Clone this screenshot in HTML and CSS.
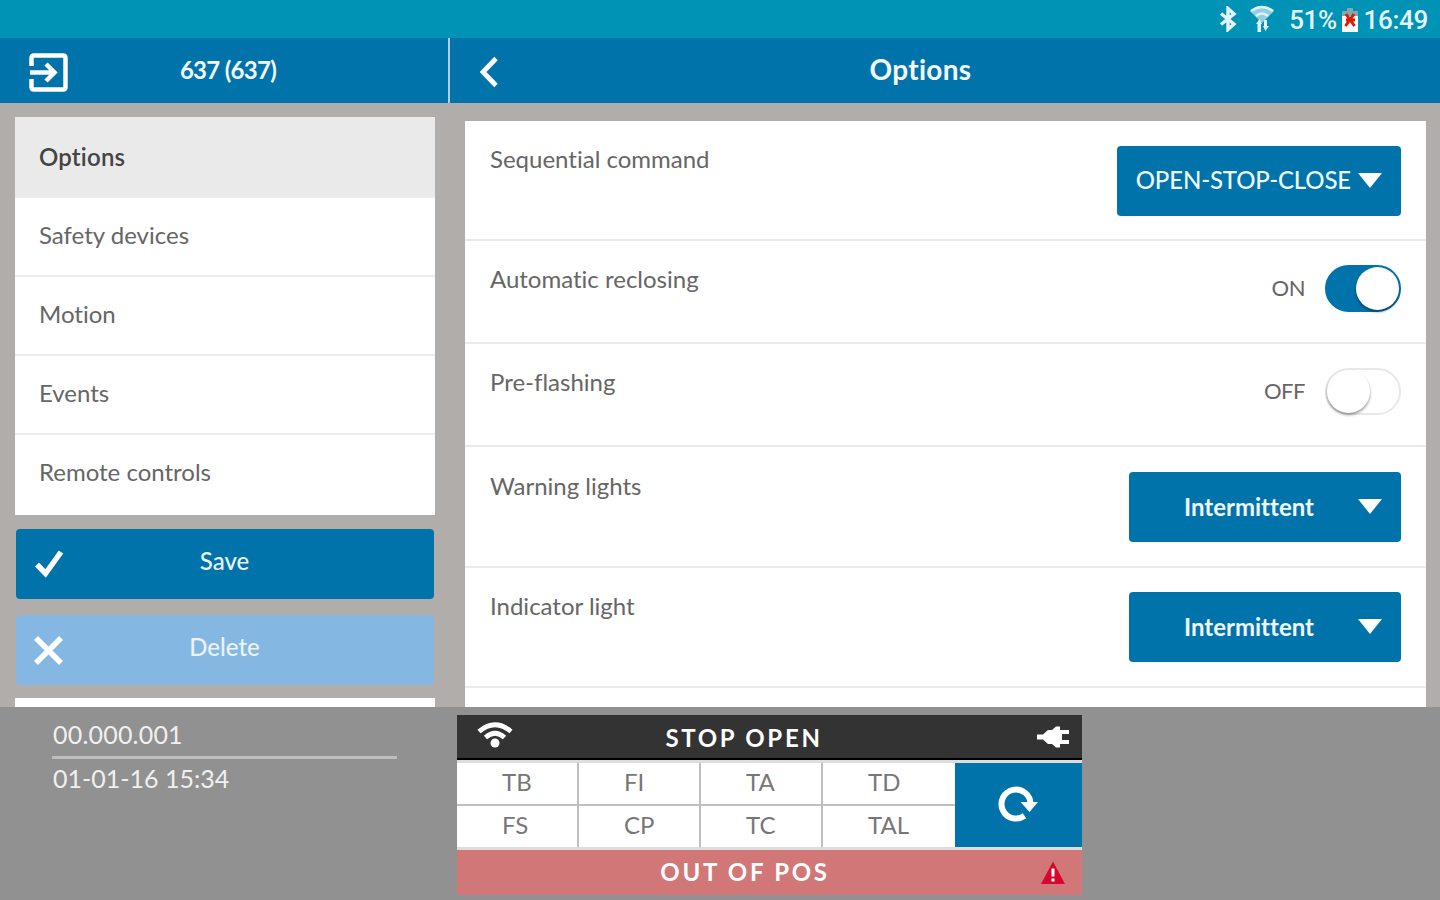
FILE: index.html
```html
<!DOCTYPE html>
<html lang="en">
  <head>
    <meta charset="UTF-8" />
    <meta name="viewport" content="width=device-width, initial-scale=1.0" />
    <title>Options</title>
    <link rel="stylesheet" href="styles.css">
  </head>
  <body>
    <div class="statusbar">
      <svg class="bt" viewBox="0 0 18 26"><path d="M2 7.5 L15 18 L9 23.5 V2.5 L15 8 L2 18.5" /></svg>
      <svg class="signal" viewBox="0 0 26 28">
        <path class="fan" d="M1 7 Q13 -3 25 7 L13 19 Z" />
        <path class="arcs" d="M2 7 Q13 -1 24 7 M7 12 Q13 7 19 12" />
        <path class="arrows" d="M7 20 L10.500 15 L13 20 H12 V28 H8.500 V20 Z M15 16 H18 V22 H20 L16.500 27 L14 22 H15 Z" />
      </svg>
      <span class="percent">51%</span>
      <svg class="battery" viewBox="0 0 16 24">
        <path class="cap" d="M5 0 H11 V3 H16 V8 H0 V3 H5 Z" />
        <path class="cell" d="M0 8 H16 V24 H0 Z" />
        <path class="cross" d="M4 6 L12.500 18 M12 6 L3.500 18 M4 12 H13" />
      </svg>
      <span class="clock">16:49</span>
    </div>

    <div class="header">
      <div class="header-left">
        <svg class="exit" viewBox="0 0 40 40">
          <path d="M2.500 13 V5 Q2.500 2.500 5 2.500 H34 Q36.500 2.500 36.500 5 V34 Q36.500 36.500 34 36.500 H5 Q2.500 36.500 2.500 34 V26" />
          <path d="M1 19.500 H25 M17 11 L25.500 19.500 L17 28" />
        </svg>
        <p class="device">637 (637)</p>
      </div>
      <div class="header-right">
        <svg class="back" viewBox="0 0 20 32"><path d="M17 2.500 L4 16 L17 29.500" /></svg>
        <p class="title">Options</p>
      </div>
    </div>

    <div class="main">
      <div class="sidebar">
        <div class="menu">
          <div class="item active">Options</div>
          <div class="item">Safety devices</div>
          <div class="item">Motion</div>
          <div class="item">Events</div>
          <div class="item">Remote controls</div>
        </div>
        <div class="btn save">
          <svg class="btn-icon" viewBox="0 0 32 32"><path class="tick" d="M4 16.500 L12.500 25.500 L28 4" /></svg>
          <span class="btn-text">Save</span>
        </div>
        <div class="btn delete">
          <svg class="btn-icon" viewBox="0 0 32 32"><path class="cancel" d="M3 4 L28 29 M28 4 L3 29" /></svg>
          <span class="btn-text">Delete</span>
        </div>
        <div class="next"></div>
      </div>

      <div class="content">
        <div class="row tall first">
          <span class="label">Sequential command</span>
          <div class="select wide">
            <span class="value">OPEN-STOP-CLOSE</span>
            <svg class="arrow" viewBox="0 0 24 15"><path d="M0 0 H24 L12 15 Z" /></svg>
          </div>
        </div>
        <div class="row">
          <span class="label">Automatic reclosing</span>
          <div class="switch">
            <span class="state">ON</span>
            <div class="track on"><div class="knob"></div></div>
          </div>
        </div>
        <div class="row">
          <span class="label">Pre-flashing</span>
          <div class="switch">
            <span class="state">OFF</span>
            <div class="track"><div class="knob"></div></div>
          </div>
        </div>
        <div class="row tall">
          <span class="label">Warning lights</span>
          <div class="select">
            <span class="value">Intermittent</span>
            <svg class="arrow" viewBox="0 0 24 15"><path d="M0 0 H24 L12 15 Z" /></svg>
          </div>
        </div>
        <div class="row tall last">
          <span class="label">Indicator light</span>
          <div class="select">
            <span class="value">Intermittent</span>
            <svg class="arrow" viewBox="0 0 24 15"><path d="M0 0 H24 L12 15 Z" /></svg>
          </div>
        </div>
        <div class="row"></div>
      </div>
    </div>

    <div class="footer">
      <div class="info">
        <p class="version">00.000.001</p>
        <p class="date">01-01-16 15:34</p>
      </div>
      <div class="panel">
        <div class="bar">
          <svg class="wifi" viewBox="0 0 36 26">
            <path d="M2 9.500 Q18 -4 34 9.500" />
            <path d="M8.500 15.500 Q18 7 27.500 15.500" />
            <circle cx="18" cy="21" r="4.500" />
          </svg>
          <span class="bar-text">STOP OPEN</span>
          <svg class="plug" viewBox="0 0 32 22"><path d="M0 8.500 H6 L11 4 H15 L19 0.500 H23 V4 H32 V8 H25 V14 H32 V18 H23 V21.500 H19 L15 18 H11 L6 13.500 H0 Z" /></svg>
        </div>
        <div class="middle">
          <div class="grid">
            <div class="cell-box">TB</div>
            <div class="cell-box">FI</div>
            <div class="cell-box">TA</div>
            <div class="cell-box">TD</div>
            <div class="cell-box">FS</div>
            <div class="cell-box">CP</div>
            <div class="cell-box">TC</div>
            <div class="cell-box">TAL</div>
          </div>
          <div class="refresh">
            <svg class="reload" viewBox="0 0 42 36">
              <path class="ring" d="M26.500 29.800 A14.500 14.500 0 1 1 32.500 18" />
              <path class="head" d="M22.500 16 H40 L31.500 26 Z" />
            </svg>
          </div>
        </div>
        <div class="bar alarm">
          <span class="bar-text">OUT OF POS</span>
          <svg class="warn" viewBox="0 0 26 24">
            <path class="triangle" d="M13 0.500 L25 23 H1 Z" />
            <path class="mark" d="M13 7.500 V15.500 M13 17.500 V20.500" />
          </svg>
        </div>
      </div>
    </div>
  </body>
</html>
```
FILE: styles.css
```css
* {
  box-sizing: border-box;
}
body {
  margin: 0;
  height: 900px;
  overflow: hidden;
  display: flex;
  flex-direction: column;
  font-family: Lato, sans-serif;
  font-size: 24px;
  line-height: 30px;
  font-variant-ligatures: none;
  color: #666;
  background-color: #b0adaa;
}
p {
  margin: 0;
}
svg {
  display: block;
  flex: none;
  fill: none;
}

.statusbar {
  height: 38px;
  flex: none;
  display: flex;
  justify-content: flex-end;
  align-items: center;
  padding-right: 12px;
  padding-top: 2px;
  background-color: #0093b5;
  color: #e4f5fa;
  font-family: Roboto, sans-serif;
  font-size: 26px;
}
.bt {
  width: 18px;
  height: 26px;
  margin-right: 12px;
  margin-bottom: 3px;
  stroke: #e4f5fa;
  stroke-width: 3.4;
}
.signal {
  width: 26px;
  height: 28px;
  margin-right: 14px;
  margin-bottom: 5px;
}
.fan {
  fill: #8fd0e2;
}
.arcs {
  stroke: #e4f5fa;
  stroke-width: 2.5;
}
.arrows {
  fill: #e4f5fa;
}
.percent {
  margin-right: 5px;
  letter-spacing: -0.5px;
  font-weight: 500;
}
.battery {
  width: 16px;
  height: 24px;
  margin-right: 6px;
}
.cap {
  fill: #7fa9ad;
}
.cell {
  fill: #fff;
}
.cross {
  stroke: #e01b00;
  stroke-width: 3;
}
.clock {
  letter-spacing: -0.3px;
  font-weight: 500;
}

.header {
  height: 65px;
  flex: none;
  display: flex;
  background-color: #0073ab;
  color: #f2f8fc;
  font-weight: bold;
}
.header-left {
  width: 450px;
  display: flex;
  padding: 15px 0 0 29px;
  border-right: 2px solid #b5cfe0;
}
.exit {
  width: 40px;
  height: 40px;
  stroke: #fff;
  stroke-width: 4.5;
}
.device {
  width: 318px;
  text-align: center;
  padding-top: 2px;
  letter-spacing: -0.7px;
}
.header-right {
  flex: 1;
  display: flex;
  padding: 16px 0 0 29px;
}
.back {
  width: 20px;
  height: 36px;
  stroke: #fff;
  stroke-width: 4.8;
}
.title {
  width: 843px;
  text-align: center;
  font-size: 28px;
  letter-spacing: 0.3px;
}

.main {
  height: 604px;
  flex: none;
  display: flex;
  overflow: hidden;
}
.sidebar {
  width: 465px;
  padding: 14px 30px 0 15px;
  display: flex;
  flex-direction: column;
}
.menu {
  background-color: #fff;
  height: 398px;
  flex: none;
  display: grid;
  grid-template-rows: 79px 79px 79px 79px 1fr;
}
.item {
  padding: 24px 24px 0;
  border-top: 2px solid #ececec;
  line-height: 26px;
}
.active {
  padding-top: 25px;
  background-color: #eaeaea;
  border-top-color: #eaeaea;
  color: #444;
  font-weight: 600;
  letter-spacing: 0.2px;
}
.btn {
  height: 70px;
  flex: none;
  margin: 14px 1px 0;
  border-radius: 4px;
  display: flex;
  align-items: center;
  color: #eaf3fa;
  font-weight: 500;
}
.btn-icon {
  width: 32px;
  height: 32px;
  margin-left: 17px;
  stroke: #fff;
  stroke-width: 5.5;
}
.btn-text {
  width: 319px;
  text-align: center;
  padding-bottom: 7px;
}
.save {
  background-color: #0073ab;
}
.delete {
  margin-top: 16px;
  background-color: #84b8e2;
}
.next {
  flex: 1;
  margin-top: 13px;
  background-color: #fff;
}

.content {
  width: 961px;
  height: 600px;
  margin-top: 18px;
  background-color: #fff;
}
.row {
  height: 103px;
  padding: 24px 25px 0;
  display: flex;
  justify-content: space-between;
  border-top: 2px solid #ebebeb;
}
.tall {
  height: 121px;
  padding-top: 25px;
}
.first {
  height: 118px;
  border-top: none;
}
.last {
  height: 120px;
  padding-top: 24px;
}
.label {
  padding-top: 1px;
  line-height: 26px;
}
.first .label {
  padding-top: 0;
}
.select {
  width: 272px;
  height: 70px;
  border-radius: 4px;
  display: flex;
  align-items: center;
  justify-content: flex-end;
  padding: 0 19px 1px;
  background-color: #0073ab;
  color: #f0f7fb;
  white-space: nowrap;
}
.select .value {
  margin-right: 44px;
  font-weight: bold;
}
.wide {
  width: 284px;
  padding-bottom: 2px;
}
.wide .value {
  margin-right: 7px;
  font-weight: 500;
  letter-spacing: -0.15px;
}
.arrow {
  width: 24px;
  height: 15px;
  fill: #fff;
}
.switch {
  display: flex;
}
.state {
  margin-right: 20px;
  padding-top: 8px;
  font-size: 22px;
  letter-spacing: -0.5px;
}
.track {
  width: 76px;
  height: 47px;
  border: 2px solid #e8e8e8;
  border-radius: 24px;
  display: flex;
}
.knob {
  width: 43px;
  height: 43px;
  border-radius: 50%;
  background-color: #fff;
  box-shadow: 0 2px 3px rgba(0, 0, 0, 0.4);
}
.on {
  justify-content: flex-end;
  background-color: #0073ab;
  border-color: #0073ab;
}

.footer {
  height: 193px;
  flex: none;
  display: flex;
  background-color: #919191;
}
.info {
  width: 345px;
  margin: 12px 60px 0 52px;
  color: #f0f0f0;
  font-size: 25px;
}
.version {
  height: 40px;
  padding-left: 1px;
  border-bottom: 3px solid #bdbdbd;
  letter-spacing: 0.2px;
}
.date {
  padding: 4px 0 0 1px;
}
.panel {
  width: 625px;
  height: 181px;
  margin-top: 8px;
}
.bar {
  height: 45px;
  display: flex;
  align-items: center;
  background-color: #333;
  color: #fff;
  border-bottom: 2px solid #000;
}
.bar-text {
  width: 502px;
  text-align: center;
  font-weight: bold;
  letter-spacing: 2.7px;
  padding-top: 2px;
}
.wifi {
  width: 36px;
  height: 26px;
  margin-left: 20px;
  margin-bottom: 4px;
  stroke: #fff;
  stroke-width: 4.8;
}
.wifi circle {
  fill: #fff;
  stroke: none;
}
.wifi + .bar-text {
  width: 462px;
}
.plug {
  width: 32px;
  height: 22px;
  margin-left: 62px;
  fill: #fff;
}
.middle {
  height: 90px;
  display: flex;
  border-top: 3px solid #ddd;
  border-bottom: 3px solid #ddd;
}
.grid {
  width: 498px;
  display: grid;
  grid-template-columns: 120px 120px 120px 1fr;
  grid-template-rows: 41px 1fr;
  column-gap: 2px;
  row-gap: 2px;
  background-color: #bfbfbf;
}
.cell-box {
  padding: 4px 0 0 45px;
  background-color: #fff;
  color: #777;
}
.refresh {
  flex: 1;
  display: flex;
  align-items: center;
  padding: 0 0 2px 43px;
  background-color: #0073ab;
}
.reload {
  width: 42px;
  height: 36px;
}
.ring {
  stroke: #fff;
  stroke-width: 6;
}
.head {
  fill: #fff;
}
.alarm {
  background-color: #d27777;
  border-bottom: none;
}
.alarm .bar-text {
  margin-left: 37px;
  padding: 0 0 1px;
}
.warn {
  width: 26px;
  height: 24px;
  margin-left: 44px;
}
.triangle {
  fill: #d6062f;
}
.mark {
  stroke: #fff;
  stroke-width: 3;
}
```
